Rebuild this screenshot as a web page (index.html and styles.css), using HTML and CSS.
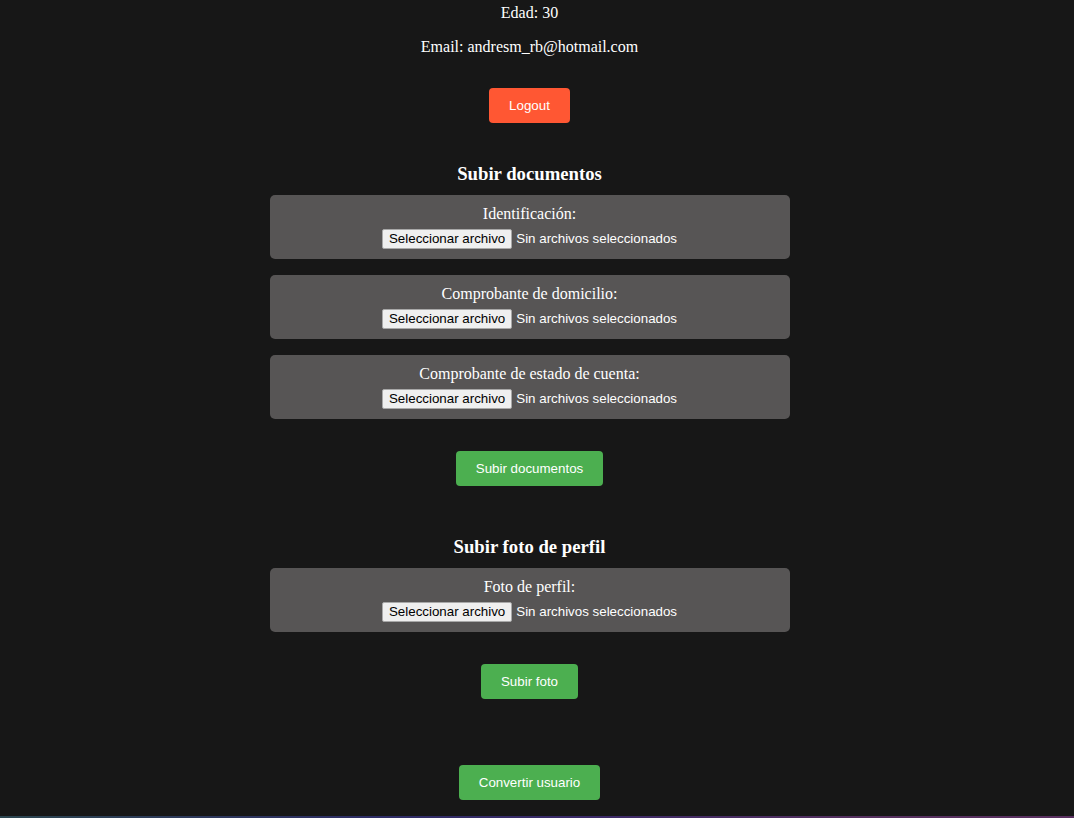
FILE: index.html
```html
<!DOCTYPE html>
<html lang="es">
<head>
<meta charset="utf-8">
<title>Perfil</title>
<link rel="stylesheet" href="styles.css">
</head>
<body>
<main class="page">
  <p class="info info-first">Edad: 30</p>
  <p class="info">Email: andresm_rb@hotmail.com</p>
  <button class="btn btn-red btn-logout">Logout</button>

  <section class="upload">
    <h3 class="upload-title">Subir documentos</h3>
    <div class="field">
      <label class="field-label">Identificación:</label>
      <div class="file-row"><span class="file-btn">Seleccionar archivo</span><span class="file-name">Sin archivos seleccionados</span></div>
    </div>
    <div class="field">
      <label class="field-label">Comprobante de domicilio:</label>
      <div class="file-row"><span class="file-btn">Seleccionar archivo</span><span class="file-name">Sin archivos seleccionados</span></div>
    </div>
    <div class="field">
      <label class="field-label">Comprobante de estado de cuenta:</label>
      <div class="file-row"><span class="file-btn">Seleccionar archivo</span><span class="file-name">Sin archivos seleccionados</span></div>
    </div>
    <button class="btn btn-green btn-submit">Subir documentos</button>
  </section>

  <section class="upload upload-photo">
    <h3 class="upload-title">Subir foto de perfil</h3>
    <div class="field">
      <label class="field-label">Foto de perfil:</label>
      <div class="file-row"><span class="file-btn">Seleccionar archivo</span><span class="file-name">Sin archivos seleccionados</span></div>
    </div>
    <button class="btn btn-green btn-submit">Subir foto</button>
  </section>

  <button class="btn btn-green btn-convert">Convertir usuario</button>
</main>
<div class="bottom-line"></div>
</body>
</html>
```

FILE: styles.css
```css
html, body {
  margin: 0;
  padding: 0;
  background: #171717;
  height: 100%;
  overflow: hidden;
}

body {
  font-family: "Liberation Serif", "Times New Roman", serif;
  color: #ffffff;
}

.page {
  width: 1059px;
  display: flex;
  flex-direction: column;
  align-items: center;
  text-align: center;
}

.info {
  margin: 0;
  font-size: 16px;
  line-height: 18px;
}

.info-first {
  margin: 4px 0 16px;
}

.btn {
  font-family: "Liberation Sans", Arial, sans-serif;
  font-size: 13.33px;
  line-height: 15px;
  padding: 10px 20px;
  border: none;
  border-radius: 4px;
  color: #ffffff;
  cursor: pointer;
}

.btn-red {
  background: #ff5733;
}

.btn-green {
  background: #4caf50;
}

.btn-logout {
  margin-top: 32px;
}

.upload {
  width: 520px;
  display: flex;
  flex-direction: column;
  align-items: center;
}

.upload-title {
  margin: 40px 0 10px;
  font-size: 18.72px;
  line-height: 22px;
  font-weight: bold;
}

.upload-photo .upload-title {
  margin-top: 50px;
}

.field {
  align-self: stretch;
  background: #575555;
  border-radius: 5px;
  padding: 10px;
  margin-bottom: 16px;
  display: flex;
  flex-direction: column;
  align-items: center;
}

.field:last-of-type {
  margin-bottom: 0;
}

.field-label {
  display: block;
  font-size: 16px;
  line-height: 18px;
  margin-bottom: 5px;
}

.file-row {
  height: 21px;
  display: flex;
  align-items: center;
  gap: 4px;
  font-family: "Liberation Sans", Arial, sans-serif;
  font-size: 13.33px;
}

.file-btn {
  display: inline-block;
  padding: 1px 6px;
  line-height: 16px;
  background: #efefef;
  color: #000000;
  border: 1px solid #a8a8a8;
  border-radius: 2px;
}

.file-name {
  color: #ffffff;
  line-height: 16px;
}

.btn-submit {
  margin-top: 32px;
}

.btn-convert {
  margin-top: 66px;
}

.bottom-line {
  position: fixed;
  left: 0;
  right: 0;
  bottom: 0;
  height: 2px;
  background: linear-gradient(to right, #2c4650, #2e2d66 35%, #3b2a68 55%, #55305f 80%, #5a3060);
}
```
